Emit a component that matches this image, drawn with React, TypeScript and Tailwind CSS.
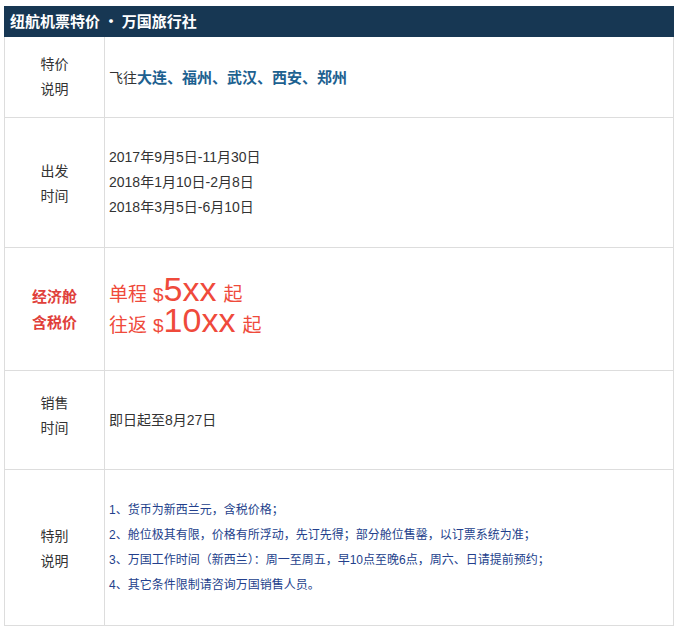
import React from "react";

function Row({ label, labelClass, h, children }: { label: React.ReactNode; labelClass?: string; h: string; children: React.ReactNode }) {
  return (
    <div className={`flex border-t border-[#dddddd] ${h}`}>
      <div className={`w-[100px] shrink-0 border-r border-[#dddddd] flex flex-col items-center justify-center leading-[25px] font-['Noto_Sans_CJK_SC','Liberation_Sans',sans-serif] ${labelClass ?? "text-[14px] text-[#333]"}`}>
        {label}
      </div>
      <div className="flex-1 flex flex-col justify-center pl-[4px]">{children}</div>
    </div>
  );
}

function Price({ trip, amount }: { trip: string; amount: string }) {
  return (
    <div className="flex items-baseline h-[29px]">
      <span className="text-[19px] leading-[29px] font-['Noto_Sans_CJK_SC',sans-serif]">{trip}</span>
      <span className="text-[19px] leading-[29px] ml-[6px] font-['Liberation_Sans',Arial,sans-serif]">$</span>
      <span className="text-[34px] leading-[29px] font-['Liberation_Sans',Arial,sans-serif]">{amount}</span>
      <span className="text-[19px] leading-[29px] ml-[7px] font-['Noto_Sans_CJK_SC',sans-serif]">起</span>
    </div>
  );
}

export default function App() {
  return (
    <div className="w-[679px] h-[637px] bg-white pt-[6px] pl-[4px] font-['Liberation_Sans','Noto_Sans_CJK_SC',sans-serif]">
      <div className="w-[670px] border-l border-r border-b border-[#dddddd]">
        <div className="h-[31px] bg-[#173753] flex items-center pl-[6px] text-white font-bold text-[15px] -mx-px font-['Noto_Sans_CJK_SC','Liberation_Sans',sans-serif]">
          纽航机票特价 · 万国旅行社
        </div>
        <div className="flex h-[80px]">
          <div className="w-[100px] shrink-0 border-r border-[#dddddd] flex flex-col items-center justify-center leading-[25px] text-[14px] text-[#333] pb-[3px] font-['Noto_Sans_CJK_SC','Liberation_Sans',sans-serif]">
            <span>特价</span>
            <span>说明</span>
          </div>
          <div className="flex-1 flex items-center pl-[4px] text-[14px] text-[#333] font-['Noto_Sans_CJK_SC','Liberation_Sans',sans-serif]">
            飞往<span className="text-[#1d6190] font-bold text-[15px]">大连、福州、武汉、西安、郑州</span>
          </div>
        </div>
        <Row h="h-[130px]" label={<><span>出发</span><span>时间</span></>}>
          <div className="text-[14px] text-[#333] leading-[25px]">
            <div>2017年9月5日-11月30日</div>
            <div>2018年1月10日-2月8日</div>
            <div>2018年3月5日-6月10日</div>
          </div>
        </Row>
        <Row h="h-[123px]" labelClass="text-[15px] text-[#e0403a] font-bold leading-[26px]" label={<><span>经济舱</span><span>含税价</span></>}>
          <div className="text-[#ef4a3b] flex flex-col gap-[2px] pb-[8px]">
            <Price trip="单程" amount="5xx" />
            <Price trip="往返" amount="10xx" />
          </div>
        </Row>
        <Row h="h-[99px]" labelClass="text-[14px] text-[#333] pb-[10px]" label={<><span>销售</span><span>时间</span></>}>
          <div className="text-[14px] text-[#333]">即日起至8月27日</div>
        </Row>
        <Row h="h-[156px]" label={<><span>特别</span><span>说明</span></>}>
          <div className="text-[12px] text-[#233f8c] leading-[25px]">
            <div>1、货币为新西兰元，含税价格；</div>
            <div>2、舱位极其有限，价格有所浮动，先订先得；部分舱位售罄，以订票系统为准；</div>
            <div>3、万国工作时间（新西兰）：周一至周五，早10点至晚6点，周六、日请提前预约；</div>
            <div>4、其它条件限制请咨询万国销售人员。</div>
          </div>
        </Row>
      </div>
    </div>
  );
}
